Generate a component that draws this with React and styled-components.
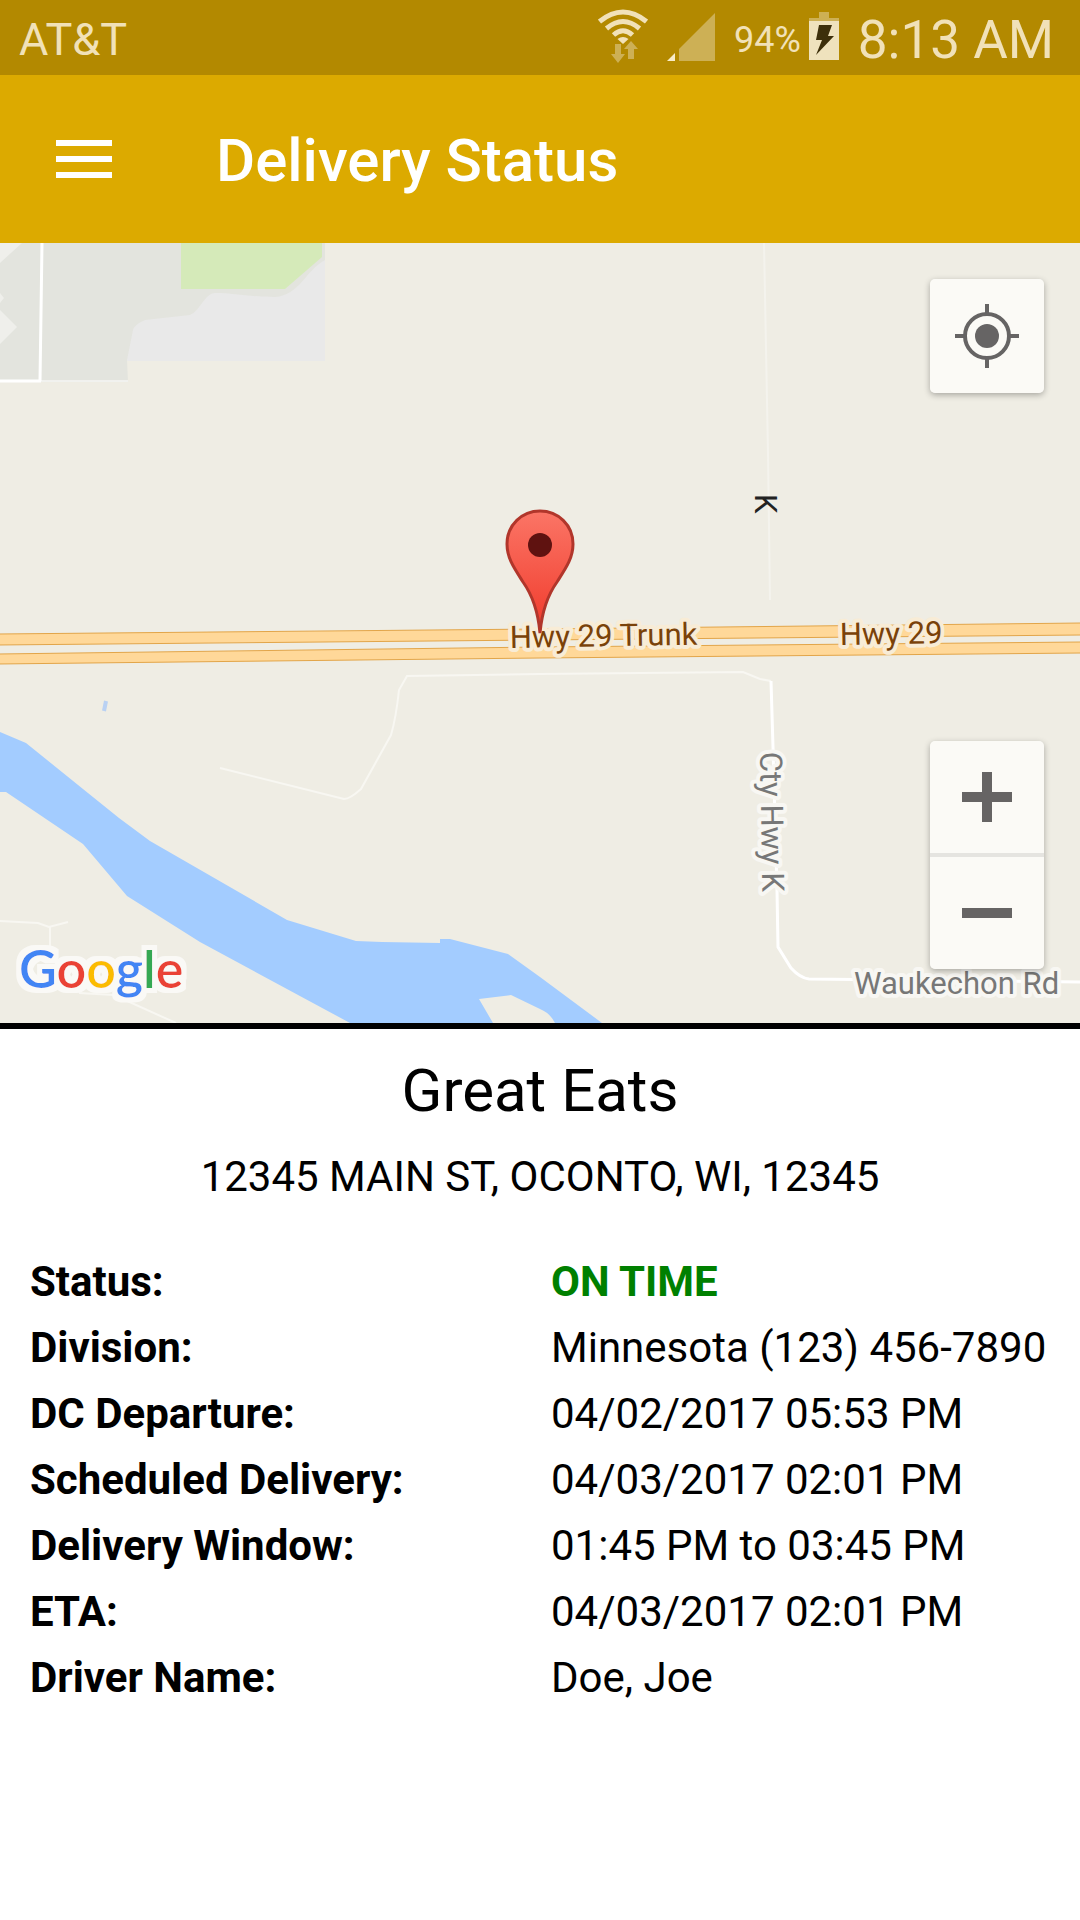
import React from "react";
import styled, { createGlobalStyle } from "styled-components";

const GlobalStyle = createGlobalStyle`
  * {
    box-sizing: border-box;
  }
  body {
    margin: 0;
    background: #fff;
    color: #000;
    font-family: Roboto, "Liberation Sans", sans-serif;
  }
`;

const StatusBar = styled.div`
  display: flex;
  align-items: center;
  justify-content: space-between;
  height: 75px;
  padding: 4px 26px 0 19px;
  background: #b38900;
  color: #f1e1b8;
`;
const StatusGroup = styled.div`
  display: flex;
  align-items: center;
  gap: ${({ gap }) => gap || 19}px;
`;
const StatusText = styled.span`
  font-size: ${({ size }) => size}px;
  line-height: 64px;
  white-space: nowrap;
`;
const StatusIcon = styled.svg`
  display: block;
  height: 71px;
  flex: none;
`;

const Header = styled.header`
  display: flex;
  align-items: center;
  gap: 88px;
  height: 168px;
  padding: 0 40px;
  background: #dcaa00;
  color: #fff;
`;
const MenuButton = styled.button`
  display: flex;
  flex-direction: column;
  gap: 10px;
  width: 88px;
  padding: 16px;
  border: 0;
  background: none;
  cursor: pointer;
`;
const MenuLine = styled.span`
  height: 6px;
  background: #fff;
`;
const HeaderTitle = styled.h1`
  margin: 0;
  padding-top: 4px;
  font-size: 60px;
  font-weight: 500;
  line-height: 70px;
`;

const MapPanel = styled.section`
  position: relative;
  height: 786px;
  border-bottom: 6px solid #000;
  background: #efede4;
  overflow: hidden;
`;
const MapCanvas = styled.svg`
  display: block;
  width: 100%;
  height: 100%;
`;
const MapLabel = styled.text`
  font-size: 31px;
  fill: ${({ color }) => color};
  stroke: ${({ halo }) => halo || "none"};
  stroke-width: 8px;
  stroke-linejoin: round;
  paint-order: stroke;
`;
const GoogleMark = styled.text`
  font-family: Lato, sans-serif;
  font-size: 52px;
  font-weight: 600;
`;
const MapControls = styled.div`
  position: absolute;
  top: 36px;
  right: 36px;
  bottom: 54px;
  display: flex;
  flex-direction: column;
  justify-content: space-between;
`;
const ControlCard = styled.div`
  display: flex;
  flex-direction: column;
  gap: 4px;
  border-radius: 5px;
  background: #e5e4e0;
  box-shadow: 0 2px 6px rgba(0, 0, 0, 0.3);
  overflow: hidden;
`;
const ControlButton = styled.button`
  display: flex;
  align-items: center;
  justify-content: center;
  width: 114px;
  height: ${({ tall }) => (tall ? 114 : 112)}px;
  padding: 0;
  border: 0;
  background: #fbfaf6;
  color: #666464;
  cursor: pointer;
`;

const Details = styled.main`
  padding: 27px 30px;
`;
const StoreName = styled.h2`
  margin: 0 0 26px;
  font-size: 60px;
  font-weight: 400;
  line-height: 70px;
  text-align: center;
`;
const Address = styled.p`
  margin: 0 0 47px;
  font-size: 42px;
  line-height: 50px;
  text-align: center;
`;
const InfoList = styled.dl`
  display: grid;
  grid-template-columns: 1fr 1fr;
  column-gap: 22px;
  margin: 0;
  font-size: 42px;
  line-height: 66px;
`;
const InfoLabel = styled.dt`
  font-weight: 700;
`;
const InfoValue = styled.dd`
  margin: 0;
  white-space: nowrap;
  color: ${({ highlight }) => (highlight ? "#008000" : "inherit")};
  font-weight: ${({ highlight }) => (highlight ? 700 : 400)};
`;

const delivery = [
  { label: "Status:", value: "ON TIME", highlight: true },
  { label: "Division:", value: "Minnesota (123) 456-7890" },
  { label: "DC Departure:", value: "04/02/2017 05:53 PM" },
  { label: "Scheduled Delivery:", value: "04/03/2017 02:01 PM" },
  { label: "Delivery Window:", value: "01:45 PM to 03:45 PM" },
  { label: "ETA:", value: "04/03/2017 02:01 PM" },
  { label: "Driver Name:", value: "Doe, Joe" },
];

const WifiIcon = () => (
  <StatusIcon width="50" viewBox="0 4 50 71" aria-hidden="true">
    <g fill="none" stroke="#f1e1b8" strokeWidth="5">
      <path d="M1.500 21.500 Q25 2.500 48.500 21.500" />
      <path d="M8.500 28.500 Q25 14.500 41.500 28.500" />
      <path d="M15.500 35 Q25 26.500 34.500 35" />
    </g>
    <path d="M19.500 39 Q25 35 30.500 39 L25 44 Z" fill="#f1e1b8" />
    <path
      d="M17 44 h6 v10 h4 l-7 9 l-7 -9 h4 Z M30 59 v-10 h-4 l7 -8 l7 8 h-4 v10 Z"
      fill="#cdb055"
    />
  </StatusIcon>
);

const SignalIcon = () => (
  <StatusIcon width="48" viewBox="0 4 48 71" aria-hidden="true">
    <path d="M48 13 V61 H12 V49 Z" fill="#cdb055" />
    <path d="M0 61 L8 53 V61 Z" fill="#f8ecc8" />
  </StatusIcon>
);

const BatteryIcon = () => (
  <StatusIcon width="30" viewBox="0 4 30 71" aria-hidden="true">
    <path d="M10 12 h10 v6 h10 v3 H0 v-3 h10 Z" fill="#cdb055" />
    <path d="M0 21 h30 v39 H0 Z" fill="#efe2bd" />
    <path d="M10 25 h13 l-4 11 h6 L7 55 l6 -15 H7 Z" fill="#3d2f0a" />
  </StatusIcon>
);

const LocateIcon = () => (
  <svg width="64" height="64" viewBox="0 0 64 64" aria-hidden="true">
    <circle cx="32" cy="32" r="12" fill="currentColor" />
    <g fill="none" stroke="currentColor" strokeWidth="4">
      <circle cx="32" cy="32" r="22" />
      <path d="M32 0 V9 M32 55 V64 M0 32 H9 M55 32 H64" />
    </g>
  </svg>
);

const ZoomIcon = ({ d }) => (
  <svg width="50" height="50" viewBox="0 0 50 50" aria-hidden="true">
    <path d={d} stroke="currentColor" strokeWidth="10" />
  </svg>
);

const DeliveryMap = () => (
  <MapCanvas viewBox="0 0 1080 780" preserveAspectRatio="xMidYMid slice">
    <defs>
      <linearGradient id="pin" x1="0" y1="0" x2="0" y2="1">
        <stop offset="0" stopColor="#fb7566" />
        <stop offset="1" stopColor="#f03a2b" />
      </linearGradient>
      {/* one outline round the whole word, so it never covers a letter */}
      <filter id="halo" x="-10%" y="-20%" width="120%" height="140%">
        <feMorphology
          in="SourceAlpha"
          operator="dilate"
          radius="5"
          result="grown"
        />
        <feFlood floodColor="#faf9f6" />
        <feComposite in2="grown" operator="in" result="outline" />
        <feMerge>
          <feMergeNode in="outline" />
          <feMergeNode in="SourceGraphic" />
        </feMerge>
      </filter>
    </defs>

    {/* town blocks */}
    <path d="M127 118 L120 70 L325 10 V118 Z" fill="#e9e9e9" />
    <path
      d="M0 0 H325 V17 C305 28 300 52 275 54 C250 54 235 50 215 50 C205 50 200 68 190 72 L145 77 Q134 82 133 87 L127 117 L128 139 H0 Z"
      fill="#e3e4de"
    />
    <path d="M181 0 H322 V14 L285 46 H181 Z" fill="#d5eab9" />
    <path
      d="M0 0 H22 L0 20 Z M0 50 L4 55 L0 60 Z M0 67 L17 84 L0 101 Z"
      fill="#efefeb"
    />
    <path d="M42 0 L40 138 M0 138 H41" stroke="#fff" strokeWidth="3" fill="none" />
    <path d="M40 138 H128" stroke="#fff" strokeWidth="1" />

    {/* water */}
    <path
      d="M0 489 L26 500 L83 546 L119 575 L150 598 L287 677 L356 698 L382 699 L440 700 V696 H450 L508 711 L540 734 L602 780 H555 Q550 770 540 766 L511 752 L479 756 L493 780 H350 L200 699 L127 653 L83 601 L6 549 H0 Z"
      fill="#a3ccff"
    />
    <path d="M106 458 L104 468" stroke="#b9d1f3" strokeWidth="4" />

    {/* small roads */}
    <g fill="none" stroke="#f8f7f2" strokeWidth="2">
      <path d="M764 0 L768 210 L770 357" stroke="#f4f3ed" />
      <path d="M220 525 L344 556 Q350 556 361 546 L391 492 Q396 475 399 447 L407 433 L540 431 L743 429 L760 436 L771 438" />
      <path d="M0 678 L38 680 L49 684 L68 679 M50 684 V704 M79 750 L114 752 L176 780" />
    </g>
    <path
      d="M771 438 L773 504 L777 647 L778 704 L791 725 Q800 735 809 736 L1080 739"
      fill="none"
      stroke="#fff"
      strokeWidth="3"
    />

    {/* highway */}
    <g fill="#ffd899" stroke="#e2a549" strokeWidth="1">
      <path d="M-2 391 L540 386 L1082 380 V392 L540 397 L-2 402 Z" />
      <path d="M-2 411 L540 404 L1082 399 V410 L540 415 L-2 421 Z" />
    </g>

    <MapLabel color="#222" transform="translate(755 251) rotate(90)">
      K
    </MapLabel>
    <MapLabel
      color="#7a4209"
      halo="#f8ecd6"
      transform="translate(510 405) rotate(-1)"
    >
      Hwy 29 Trunk
    </MapLabel>
    <MapLabel
      color="#7a4209"
      halo="#f8ecd6"
      transform="translate(840 402) rotate(-1)"
    >
      Hwy 29
    </MapLabel>
    <MapLabel
      color="#777"
      halo="#f8f7f3"
      transform="translate(760 509) rotate(89)"
    >
      Cty Hwy K
    </MapLabel>
    <MapLabel color="#777" halo="#f8f7f3" transform="translate(854 751)">
      Waukechon Rd
    </MapLabel>

    {/* delivery pin */}
    <path
      d="M540 390 C538 368 533 353 523 339 C514 325 507 315 507 301 C507 282 522 268 540 268 C558 268 573 282 573 301 C573 315 566 325 557 339 C547 353 542 368 540 390 Z"
      fill="url(#pin)"
      stroke="#b1362b"
      strokeWidth="3"
    />
    <circle cx="540" cy="302" r="12" fill="#5f1210" />

    <GoogleMark x="19" y="745" filter="url(#halo)">
      <tspan fill="#4285f4">G</tspan>
      <tspan fill="#ea4335">o</tspan>
      <tspan fill="#fbbc05">o</tspan>
      <tspan fill="#4285f4">g</tspan>
      <tspan fill="#34a853">l</tspan>
      <tspan fill="#ea4335">e</tspan>
    </GoogleMark>
  </MapCanvas>
);

const App = () => {
  return (
    <>
      <GlobalStyle />
      <StatusBar>
        <StatusText size={45}>AT&amp;T</StatusText>
        <StatusGroup>
          <WifiIcon />
          <SignalIcon />
          <StatusGroup gap={8}>
            <StatusText size={36}>94%</StatusText>
            <BatteryIcon />
          </StatusGroup>
          <StatusText size={53}>8:13 AM</StatusText>
        </StatusGroup>
      </StatusBar>
      <Header>
        <MenuButton aria-label="Menu">
          <MenuLine />
          <MenuLine />
          <MenuLine />
        </MenuButton>
        <HeaderTitle>Delivery Status</HeaderTitle>
      </Header>
      <MapPanel>
        <DeliveryMap />
        <MapControls>
          <ControlCard>
            <ControlButton tall aria-label="My location">
              <LocateIcon />
            </ControlButton>
          </ControlCard>
          <ControlCard>
            <ControlButton aria-label="Zoom in">
              <ZoomIcon d="M0 25 H50 M25 0 V50" />
            </ControlButton>
            <ControlButton aria-label="Zoom out">
              <ZoomIcon d="M0 25 H50" />
            </ControlButton>
          </ControlCard>
        </MapControls>
      </MapPanel>
      <Details>
        <StoreName>Great Eats</StoreName>
        <Address>12345 MAIN ST, OCONTO, WI, 12345</Address>
        <InfoList>
          {delivery.map(({ label, value, highlight }) => (
            <React.Fragment key={label}>
              <InfoLabel>{label}</InfoLabel>
              <InfoValue highlight={highlight}>{value}</InfoValue>
            </React.Fragment>
          ))}
        </InfoList>
      </Details>
    </>
  );
};

export default App;
